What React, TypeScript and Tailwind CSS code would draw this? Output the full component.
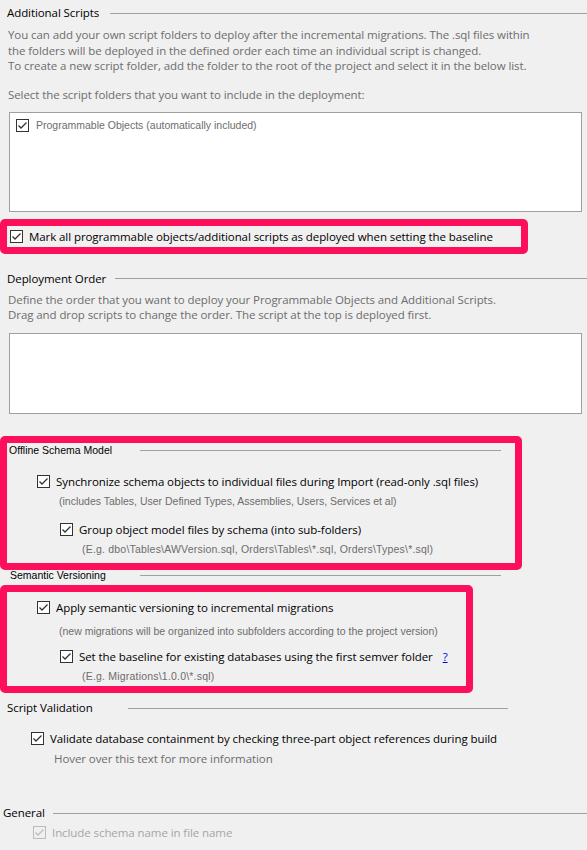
import React from 'react';

const segoe = { fontFamily: '"Open Sans", "Noto Sans", sans-serif', letterSpacing: '-0.08px' };
const msSans = { fontFamily: '"Liberation Sans", Arial, sans-serif' };

function Check({ disabled = false }: { disabled?: boolean }) {
  const c = disabled ? '#bcbcbc' : '#333333';
  return (
    <span
      className={`flex h-[13px] w-[13px] shrink-0 items-center justify-center border ${
        disabled ? 'border-[#bcbcbc] bg-[#f0f0f0]' : 'border-[#333333] bg-white'
      }`}
    >
      <svg width="11" height="11" viewBox="0 0 11 11">
        <path d="M1.5 5.5 L4 8 L9.5 2.5" fill="none" stroke={c} strokeWidth="1.3" />
      </svg>
    </span>
  );
}

function GroupHeader({
  title,
  titleWidth,
  width,
  font = segoe,
  className = '',
}: {
  title: string;
  titleWidth: string;
  width: string;
  font?: React.CSSProperties;
  className?: string;
}) {
  return (
    <div className={`flex items-center ${width} ${className}`}>
      <span
        className={`${titleWidth} shrink-0 whitespace-nowrap text-black ${
          font === msSans ? 'text-[10.5px]' : 'text-[11.5px]'
        }`}
        style={font}
      >
        {title}
      </span>
      <span className="h-px flex-1 bg-[#a0a0a0]" />
    </div>
  );
}

export default function App() {
  return (
    <div className="flex h-[850px] w-[587px] flex-col overflow-hidden bg-[#f0f0f0] text-black">
      {/* Additional Scripts */}
      <GroupHeader
        title="Additional Scripts"
        titleWidth="w-[103px]"
        width="ml-[7px] w-[580px]"
        className="mt-[5px] h-[16px]"
      />
      <div
        className="ml-[8px] mt-[6px] text-[11.5px] leading-[15.5px] text-[#6d6d6d] whitespace-nowrap"
        style={segoe}
      >
        <div>You can add your own script folders to deploy after the incremental migrations. The .sql files within</div>
        <div>the folders will be deployed in the defined order each time an individual script is changed.</div>
        <div>To create a new script folder, add the folder to the root of the project and select it in the below list.</div>
      </div>
      <div
        className="ml-[8px] mt-[13px] h-[16px] text-[11.5px] leading-[16px] text-[#6d6d6d]"
        style={segoe}
      >
        Select the script folders that you want to include in the deployment:
      </div>
      <div className="ml-[9px] mt-[9px] h-[100px] w-[573px] border border-[#a0a0a0] bg-white pl-[6px] pt-[6px]">
        <div className="flex items-center gap-[7px]">
          <Check />
          <span className="text-[10.5px] leading-[13px] text-[#6d6d6d]" style={msSans}>
            Programmable Objects (automatically included)
          </span>
        </div>
      </div>

      {/* Highlight 1 */}
      <div className="mt-[7px] h-[35px] w-[528px] rounded-[5px] border-[7px] border-[#fe0f5c] pl-[3px] pt-[3px]">
        <div className="flex items-center gap-[6px]">
          <Check />
          <span className="text-[11.5px] leading-[15px] text-black whitespace-nowrap" style={segoe}>
            Mark all programmable objects/additional scripts as deployed when setting the baseline
          </span>
        </div>
      </div>

      {/* Deployment Order */}
      <GroupHeader
        title="Deployment Order"
        titleWidth="w-[108px]"
        width="ml-[7px] w-[580px]"
        className="mt-[17px] h-[16px]"
      />
      <div
        className="ml-[8px] mt-[5px] text-[11.5px] leading-[15.5px] text-[#6d6d6d] whitespace-nowrap"
        style={segoe}
      >
        <div>Define the order that you want to deploy your Programmable Objects and Additional Scripts.</div>
        <div>Drag and drop scripts to change the order. The script at the top is deployed first.</div>
      </div>
      <div className="ml-[9px] mt-[10px] h-[81px] w-[573px] border border-[#a0a0a0] bg-white" />

      {/* Highlight 2: Offline Schema Model */}
      <div className="mt-[22px] h-[134px] w-[522px] rounded-[5px] border-[7px] border-[#fe0f5c]">
        <GroupHeader
          title="Offline Schema Model"
          titleWidth="w-[131px]"
          width="ml-[2px] w-[492px]"
          font={msSans}
          className="h-[16px]"
        />
        <div className="mt-[15px] flex h-[16px] items-center gap-[6px] pl-[30px]">
          <Check />
          <span className="text-[11.5px] text-black whitespace-nowrap" style={segoe}>
            Synchronize schema objects to individual files during Import (read-only .sql files)
          </span>
        </div>
        <div className="mt-[4px] h-[14px] pl-[52px] text-[10.5px] leading-[14px] text-[#6d6d6d]" style={msSans}>
          (includes Tables, User Defined Types, Assemblies, Users, Services et al)
        </div>
        <div className="mt-[14px] flex h-[16px] items-center gap-[6px] pl-[53px]">
          <Check />
          <span className="text-[11.5px] text-black whitespace-nowrap" style={segoe}>
            Group object model files by schema (into sub-folders)
          </span>
        </div>
        <div
          className="mt-[4px] h-[14px] pl-[75px] text-[10.5px] leading-[14px] tracking-[0.2px] text-[#6d6d6d] whitespace-nowrap"
          style={msSans}
        >
          (E.g. dbo\Tables\AWVersion.sql, Orders\Tables\*.sql, Orders\Types\*.sql)
        </div>
      </div>

      {/* Semantic Versioning */}
      <GroupHeader
        title="Semantic Versioning"
        titleWidth="w-[130px]"
        width="ml-[10px] w-[491px]"
        font={msSans}
        className="h-[15px] pb-[3px]"
      />

      {/* Highlight 3 */}
      <div className="h-[108px] w-[473px] rounded-[5px] border-[7px] border-[#fe0f5c]">
        <div className="mt-[8px] flex h-[16px] items-center gap-[6px] pl-[30px]">
          <Check />
          <span className="text-[11.5px] text-black whitespace-nowrap" style={segoe}>
            Apply semantic versioning to incremental migrations
          </span>
        </div>
        <div className="mt-[8px] h-[14px] pl-[52px] text-[10.5px] leading-[14px] text-[#6d6d6d] whitespace-nowrap" style={msSans}>
          (new migrations will be organized into subfolders according to the project version)
        </div>
        <div className="mt-[11px] flex h-[16px] items-center gap-[6px] pl-[53px]">
          <Check />
          <span className="text-[11.5px] text-black whitespace-nowrap" style={segoe}>
            Set the baseline for existing databases using the first semver folder
          </span>
          <span className="ml-[4px] text-[11.5px] text-[#0000ee] underline" style={segoe}>
            ?
          </span>
        </div>
        <div
          className="mt-[4px] h-[14px] pl-[75px] text-[10.5px] leading-[14px] tracking-[0.2px] text-[#6d6d6d]"
          style={msSans}
        >
          (E.g. Migrations\1.0.0\*.sql)
        </div>
      </div>

      {/* Script Validation */}
      <GroupHeader
        title="Script Validation"
        titleWidth="w-[121px]"
        width="ml-[7px] w-[501px]"
        className="mt-[9px] h-[16px] pb-[3px]"
      />
      <div className="ml-[31px] mt-[13px] flex h-[16px] items-center gap-[6px]">
        <Check />
        <span className="text-[11.5px] text-black whitespace-nowrap" style={segoe}>
          Validate database containment by checking three-part object references during build
        </span>
      </div>
      <div className="ml-[54px] mt-[4px] h-[16px] text-[11.5px] leading-[16px] text-[#6d6d6d]" style={segoe}>
        Hover over this text for more information
      </div>

      {/* General */}
      <GroupHeader
        title="General"
        titleWidth="w-[50px]"
        width="ml-[3px] w-[584px]"
        className="mt-[39px] h-[16px] pb-[1px]"
      />
      <div className="ml-[33px] mt-[3px] flex h-[16px] items-center gap-[6px]">
        <Check disabled />
        <span className="text-[11.5px] text-[#a6a6a6] whitespace-nowrap" style={segoe}>
          Include schema name in file name
        </span>
      </div>
    </div>
  );
}
